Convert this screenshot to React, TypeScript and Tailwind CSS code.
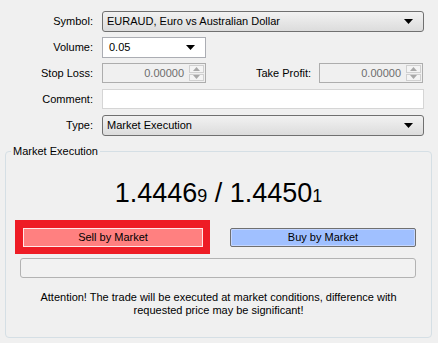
import React from "react";

function Arrow() {
  return (
    <svg width="9" height="5" viewBox="0 0 9 5" className="shrink-0">
      <path d="M0 0H9L4.5 5Z" fill="#000" />
    </svg>
  );
}

function Combo({ text, w }: { text: string; w: string }) {
  return (
    <div
      className={`${w} h-full flex items-center justify-between pl-[4px] pr-[10px] rounded-[3px] border border-[#707070] bg-gradient-to-b from-[#f2f2f2] to-[#dcdcdc] text-black`}
    >
      <span>{text}</span>
      <Arrow />
    </div>
  );
}

function Spin() {
  return (
    <div className="w-[104px] h-full flex items-stretch border border-[#adadad] bg-[#f0f0f0]">
      <div className="flex-1 flex items-center justify-end pr-[5px] text-[#6d6d6d]">0.00000</div>
      <div className="w-[16px] flex flex-col py-[1px] pr-[1px] gap-[1px]">
        <div className="flex-1 flex items-center justify-center border border-[#d0d0d0] bg-[#f4f4f4]">
          <svg width="7" height="4" viewBox="0 0 7 4">
            <path d="M0 4H7L3.5 0Z" fill="#a8a8a8" />
          </svg>
        </div>
        <div className="flex-1 flex items-center justify-center border border-[#d0d0d0] bg-[#f4f4f4]">
          <svg width="7" height="4" viewBox="0 0 7 4">
            <path d="M0 0H7L3.5 4Z" fill="#a8a8a8" />
          </svg>
        </div>
      </div>
    </div>
  );
}

function Label({ children, w = "w-[93px]" }: { children: React.ReactNode; w?: string }) {
  return <div className={`${w} shrink-0 text-right pr-0 mr-[9px] text-black`}>{children}</div>;
}

export default function App() {
  return (
    <div className="w-[438px] h-[343px] bg-[#f0f0f0] font-['Liberation_Sans',Arial,sans-serif] text-[11px] leading-[13px] overflow-hidden">
      <div className="pt-[11px] flex flex-col">
        <div className="h-[21px] flex items-center">
          <Label>Symbol:</Label>
          <Combo text="EURAUD, Euro vs Australian Dollar" w="w-[322px]" />
        </div>
        <div className="h-[21px] mt-[5px] flex items-center">
          <Label>Volume:</Label>
          <div className="w-[104px] h-full flex items-center justify-between pl-[6px] pr-[10px] border border-[#abadb3] bg-white">
            <span>0.05</span>
            <Arrow />
          </div>
        </div>
        <div className="h-[20px] mt-[5px] flex items-center">
          <Label>Stop Loss:</Label>
          <Spin />
          <div className="w-[105px] shrink-0 text-right mr-[8px]">Take Profit:</div>
          <Spin />
        </div>
        <div className="h-[20px] mt-[6px] flex items-center">
          <Label>Comment:</Label>
          <div className="w-[322px] h-full border border-[#d5d5d5] bg-white" />
        </div>
        <div className="h-[21px] mt-[6px] flex items-center">
          <Label>Type:</Label>
          <Combo text="Market Execution" w="w-[322px]" />
        </div>
      </div>

      <fieldset className="mt-[9px] ml-[5px] w-[427px] h-[193px] border border-[#d5dfe5] rounded-[4px] px-0 pb-0">
        <legend className="ml-[5px] px-[2px] text-black">Market Execution</legend>
        <div className="h-[32px] mt-[18px] flex items-end justify-center text-black text-[27px] leading-[30px]">
          <span>1.4446</span>
          <span className="text-[18px] leading-[24px]">9</span>
          <span>&nbsp;/&nbsp;</span>
          <span>1.4450</span>
          <span className="text-[18px] leading-[24px]">1</span>
        </div>
        <div className="mt-[12px] flex items-start">
          <div className="ml-[9px] bg-[#ee1c25] pt-[8px] pl-[8px] pr-[7px] pb-[7px]">
            <div className="w-[180px] h-[19px] flex items-center justify-center bg-[#ff8080] border border-[#ffe8e8] text-black">
              Sell by Market
            </div>
          </div>
          <div className="ml-[20px] mt-[8px] w-[186px] h-[19px] rounded-[2px] border border-[#707070] bg-[#a0c0ff] flex items-center justify-center text-black shadow-[inset_0_0_0_1px_#c4d6ff]">
            Buy by Market
          </div>
        </div>
        <div className="ml-[14px] mt-[4px] w-[396px] h-[20px] rounded-[3px] border border-[#b3b3b3] bg-[#f2f2f2]" />
        <div className="mt-[13px] text-center text-black leading-[13px]">
          Attention! The trade will be executed at market conditions, difference with
          <br />
          requested price may be significant!
        </div>
      </fieldset>
    </div>
  );
}
